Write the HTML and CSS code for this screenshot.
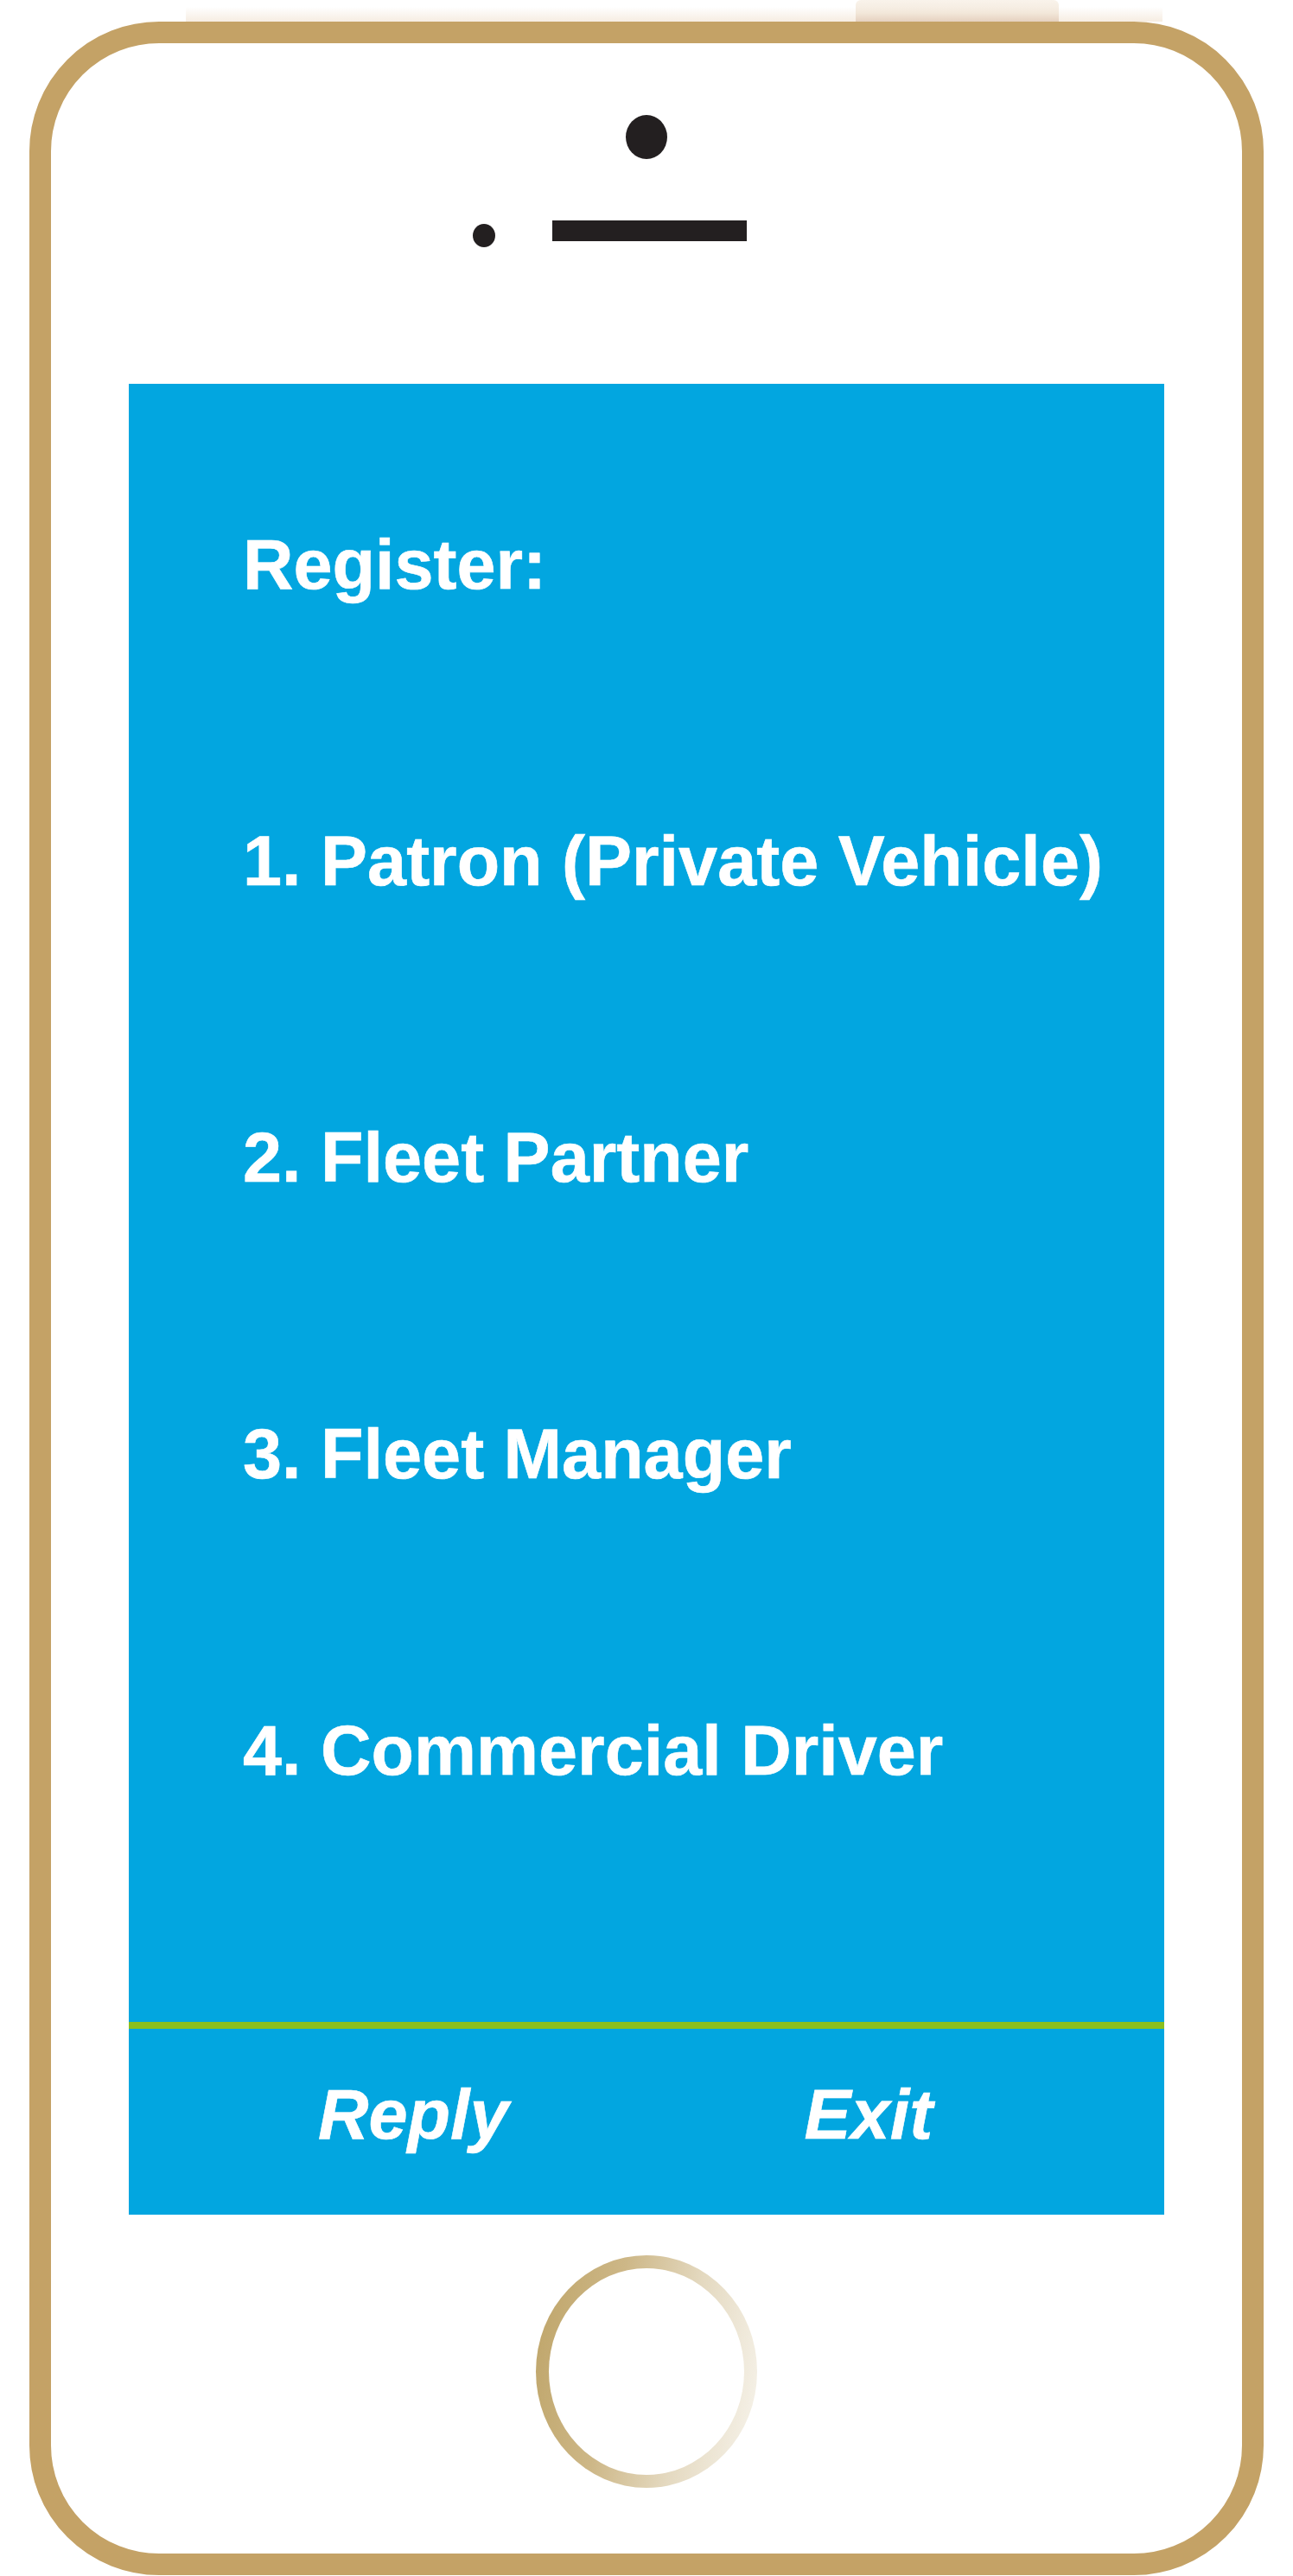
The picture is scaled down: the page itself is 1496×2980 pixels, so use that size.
FILE: index.html
```html
<!DOCTYPE html>
<html lang="en">
<head>
<meta charset="utf-8">
<title>Register</title>
<link rel="stylesheet" href="styles.css">
</head>
<body>
<div class="stage">
  <div class="glare"></div>
  <div class="side-button"></div>
  <div class="phone">
    <div class="camera"></div>
    <div class="sensors">
      <div class="sensor-dot"></div>
      <div class="speaker"></div>
      <div class="sensor-spacer"></div>
    </div>
    <div class="screen">
      <div class="menu">
        <div class="menu-line">Register:</div>
        <div class="menu-line">1. Patron (Private Vehicle)</div>
        <div class="menu-line">2. Fleet Partner</div>
        <div class="menu-line">3. Fleet Manager</div>
        <div class="menu-line">4. Commercial Driver</div>
      </div>
      <div class="divider"></div>
      <div class="actions">
        <span class="action">Reply</span>
        <span class="action">Exit</span>
      </div>
    </div>
    <div class="home-button"><div class="home-inner"></div></div>
  </div>
</div>
</body>
</html>
```

FILE: styles.css
```css
html, body {
  margin: 0;
  padding: 0;
  background: #ffffff;
}

.stage {
  position: relative;
  width: 1496px;
  height: 2980px;
  padding-top: 25px;
  box-sizing: border-box;
}

.glare {
  position: absolute;
  left: 215px;
  top: 8px;
  width: 1130px;
  height: 17px;
  background: linear-gradient(to bottom, rgba(240, 220, 200, 0) 0%, rgba(236, 214, 190, 0.45) 100%);
}

.side-button {
  position: absolute;
  left: 990px;
  top: 0;
  width: 235px;
  height: 25px;
  border-radius: 6px 6px 0 0;
  background: linear-gradient(to bottom, #f6ece0 0%, #eedfcc 60%, #dcc2ad 100%);
  opacity: 0.65;
}

.phone {
  position: relative;
  margin-left: 34px;
  width: 1428px;
  height: 2954px;
  box-sizing: border-box;
  border: 25px solid #c4a266;
  border-radius: 150px;
  background: #ffffff;
  display: flex;
  flex-direction: column;
  align-items: center;
}

.camera {
  margin-top: 83px;
  width: 48px;
  height: 51px;
  border-radius: 50%;
  background: #231f20;
}

.sensors {
  margin-top: 71px;
  display: flex;
  align-items: flex-start;
  gap: 66px;
  margin-left: 7px;
}

.sensor-dot {
  margin-top: 4px;
  width: 26px;
  height: 27px;
  border-radius: 50%;
  background: #231f20;
}

.speaker {
  width: 225px;
  height: 24px;
  background: #231f20;
}

.sensor-spacer {
  width: 26px;
  height: 1px;
}

.screen {
  margin-top: 158px;
  width: 1198px;
  height: 2118px;
  background: #02a6e0;
  display: flex;
  flex-direction: column;
  font-family: "Liberation Sans", Arial, sans-serif;
  font-weight: bold;
  color: #ffffff;
  -webkit-text-stroke: 0.6px #ffffff;
}

.menu {
  height: 1895px;
  box-sizing: border-box;
  padding: 163px 0 0 132px;
  display: flex;
  flex-direction: column;
  gap: 251px;
}

.menu-line {
  font-size: 81px;
  line-height: 92px;
  white-space: nowrap;
}

.divider {
  height: 8px;
  background: #8cbf1f;
}

.actions {
  flex: 1;
  box-sizing: border-box;
  padding: 53px 0 0 219px;
  display: flex;
  gap: 342px;
}

.action {
  font-size: 81px;
  line-height: 92px;
  font-style: italic;
}

.home-button {
  margin-top: 47px;
  width: 256px;
  height: 269px;
  border-radius: 50%;
  background: linear-gradient(100deg, #bea468 0%, #cdb787 35%, #e4d9c0 65%, #f8f5ee 100%);
  display: flex;
  align-items: center;
  justify-content: center;
}

.home-inner {
  width: 226px;
  height: 239px;
  border-radius: 50%;
  background: #ffffff;
}
```
